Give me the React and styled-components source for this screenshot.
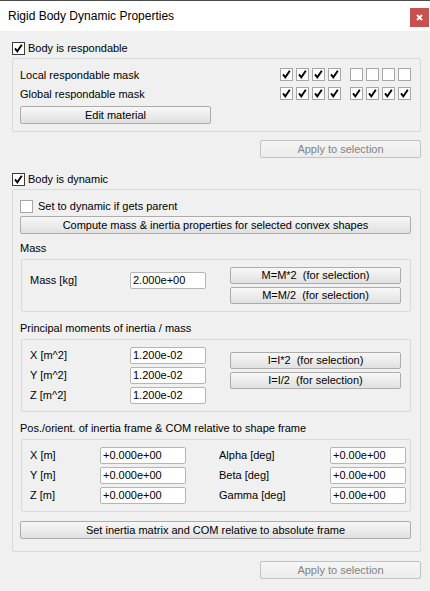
import React from "react";
import styled, { createGlobalStyle } from "styled-components";

const Global = createGlobalStyle`
  html, body { margin: 0; padding: 0; background: #f0f0f0; }
  body {
    font-family: "Liberation Sans", Arial, sans-serif;
    font-size: 11px;
    color: #000;
  }
  * { box-sizing: border-box; }
`;

const Window = styled.div`
  width: 430px;
  height: 591px;
  border-top: 1px solid #4b4b4b;
  background: #f0f0f0;
  display: flex;
  flex-direction: column;
  overflow: hidden;
`;

const TitleBar = styled.div`
  height: 30px;
  flex: none;
  background: #fff;
  display: flex;
  align-items: flex-start;
  justify-content: space-between;
  padding: 0 1px 0 8px;
`;

const Title = styled.span`
  font-size: 12px;
  line-height: 30px;
  color: #000;
`;

const CloseButton = styled.div`
  width: 19px;
  height: 19px;
  margin-top: 7px;
  background: #c75050;
  display: grid;
  place-items: center;
`;

const Content = styled.div`
  display: flex;
  flex-direction: column;
  padding: 11px 9px 0 12px;
`;

const CheckRow = styled.label`
  display: flex;
  align-items: center;
  gap: ${(p) => p.$gap ?? 3}px;
  height: 13px;
  line-height: 13px;
  margin-top: ${(p) => p.$mt ?? 0}px;
  white-space: nowrap;
`;

const Box = styled.span`
  width: 13px;
  height: 13px;
  flex: none;
  background: #fff;
  border: 1px solid ${(p) => (p.$dark ? "#3c3c3c" : "#a6a6a6")};
  display: grid;
  place-items: center;
`;

const Group = styled.div`
  border: 1px solid #d9d9d9;
  border-radius: 2px;
  display: flex;
  flex-direction: column;
  margin-top: ${(p) => p.$mt ?? 0}px;
  padding: ${(p) => p.$pad};
`;

const MaskRow = styled.div`
  display: flex;
  align-items: center;
  height: 13px;
  margin-bottom: 6px;
`;

const MaskLabel = styled.span`
  flex: 1;
  line-height: 13px;
  margin-top: 2px;
`;

const MaskSet = styled.div`
  display: flex;
  gap: 3px;
  margin-left: ${(p) => p.$ml ?? 0}px;
`;

const Button = styled.button`
  height: ${(p) => p.$h ?? 18}px;
  width: ${(p) => (p.$w ? `${p.$w}px` : "auto")};
  align-self: ${(p) => p.$align ?? "stretch"};
  margin-top: ${(p) => p.$mt ?? 0}px;
  padding: 0;
  font-family: inherit;
  font-size: 11px;
  line-height: 1;
  color: ${(p) => (p.disabled ? "#838383" : "#000")};
  border: 1px solid ${(p) => (p.disabled ? "#c2c2c2" : "#acacac")};
  border-radius: 2px;
  background: ${(p) =>
    p.disabled
      ? "linear-gradient(#f5f5f5, #ececec)"
      : "linear-gradient(#f7f7f7 0%, #ececec 50%, #e0e0e0 100%)"};
  white-space: pre;
`;

const SectionLabel = styled.div`
  height: 13px;
  line-height: 13px;
  margin-top: ${(p) => p.$mt ?? 0}px;
`;

const Inner = styled.div`
  margin: 4px 0 0 1px;
  border: 1px solid #d9d9d9;
  border-radius: 2px;
  padding: 7px ${(p) => p.$pr ?? 9}px 7px 8px;
  display: flex;
  align-items: flex-start;
`;

const FieldGrid = styled.div`
  display: grid;
  grid-template-columns: ${(p) => p.$cols};
  row-gap: 3px;
  align-items: center;
  margin-top: ${(p) => p.$mt ?? 0}px;
`;

const FieldLabel = styled.span`
  line-height: 17px;
  white-space: nowrap;
`;

const Input = styled.div`
  height: 17px;
  background: #fff;
  border: 1px solid #b5b5b5;
  border-radius: 2px;
  padding-left: 2px;
  line-height: 15px;
  white-space: nowrap;
  overflow: hidden;
`;

const ButtonCol = styled.div`
  margin-left: auto;
  width: 171px;
  display: flex;
  flex-direction: column;
  gap: 3px;
  margin-top: ${(p) => p.$mt ?? 0}px;
`;

const Check = () => (
  <svg width="11" height="11" viewBox="0 0 11 11">
    <path d="M2 5.3 L4.3 8.3 L8.8 1.8" fill="none" stroke="#000" strokeWidth="1.9" strokeLinecap="butt" strokeLinejoin="miter" />
  </svg>
);

const CheckBox = ({ checked, dark }) => (
  <Box $dark={dark}>{checked ? <Check /> : null}</Box>
);

const Mask = ({ bits }) => (
  <>
    <MaskSet>
      {bits.slice(0, 4).map((b, i) => (
        <CheckBox key={i} checked={b} />
      ))}
    </MaskSet>
    <MaskSet $ml={9}>
      {bits.slice(4).map((b, i) => (
        <CheckBox key={i} checked={b} />
      ))}
    </MaskSet>
  </>
);

export default function App() {
  return (
    <>
      <Global />
      <Window>
        <TitleBar>
          <Title>Rigid Body Dynamic Properties</Title>
          <CloseButton>
            <svg width="7" height="7" viewBox="0 0 7 7">
              <path d="M1 1 L6 6 M6 1 L1 6" stroke="#fff" strokeWidth="1.8" />
            </svg>
          </CloseButton>
        </TitleBar>
        <Content>
          <CheckRow>
            <CheckBox checked dark />
            <span>Body is respondable</span>
          </CheckRow>
          <Group $mt={3} $pad="9px 9px 7px 7px">
            <MaskRow>
              <MaskLabel>Local respondable mask</MaskLabel>
              <Mask bits={[1, 1, 1, 1, 0, 0, 0, 0]} />
            </MaskRow>
            <MaskRow>
              <MaskLabel>Global respondable mask</MaskLabel>
              <Mask bits={[1, 1, 1, 1, 1, 1, 1, 1]} />
            </MaskRow>
            <Button $w={191} $align="flex-start">Edit material</Button>
          </Group>
          <Button disabled $w={161} $align="flex-end" $mt={8}>
            Apply to selection
          </Button>
          <CheckRow $mt={15}>
            <CheckBox checked dark />
            <span>Body is dynamic</span>
          </CheckRow>
          <Group $mt={3} $pad="10px 9px 12px 7px">
            <CheckRow $gap={5}>
              <CheckBox />
              <span>Set to dynamic if gets parent</span>
            </CheckRow>
            <Button $mt={3}>Compute mass &amp; inertia properties for selected convex shapes</Button>

            <SectionLabel $mt={8}>Mass</SectionLabel>
            <Inner>
              <FieldGrid $cols="100px 76px" $mt={5}>
                <FieldLabel>Mass [kg]</FieldLabel>
                <Input>2.000e+00</Input>
              </FieldGrid>
              <ButtonCol>
                <Button $h={17}>M=M*2  (for selection)</Button>
                <Button $h={17}>M=M/2  (for selection)</Button>
              </ButtonCol>
            </Inner>

            <SectionLabel $mt={10}>Principal moments of inertia / mass</SectionLabel>
            <Inner>
              <FieldGrid $cols="100px 76px">
                <FieldLabel>X [m^2]</FieldLabel>
                <Input>1.200e-02</Input>
                <FieldLabel>Y [m^2]</FieldLabel>
                <Input>1.200e-02</Input>
                <FieldLabel>Z [m^2]</FieldLabel>
                <Input>1.200e-02</Input>
              </FieldGrid>
              <ButtonCol $mt={5}>
                <Button $h={17}>I=I*2  (for selection)</Button>
                <Button $h={17}>I=I/2  (for selection)</Button>
              </ButtonCol>
            </Inner>

            <SectionLabel $mt={10}>Pos./orient. of inertia frame &amp; COM relative to shape frame</SectionLabel>
            <Inner $pr={4}>
              <FieldGrid $cols="70px 86px 33px 111px 76px">
                <FieldLabel>X [m]</FieldLabel>
                <Input>+0.000e+00</Input>
                <span />
                <FieldLabel>Alpha [deg]</FieldLabel>
                <Input>+0.00e+00</Input>
                <FieldLabel>Y [m]</FieldLabel>
                <Input>+0.000e+00</Input>
                <span />
                <FieldLabel>Beta [deg]</FieldLabel>
                <Input>+0.00e+00</Input>
                <FieldLabel>Z [m]</FieldLabel>
                <Input>+0.000e+00</Input>
                <span />
                <FieldLabel>Gamma [deg]</FieldLabel>
                <Input>+0.00e+00</Input>
              </FieldGrid>
            </Inner>

            <Button $mt={9}>Set inertia matrix and COM relative to absolute frame</Button>
          </Group>
          <Button disabled $w={161} $align="flex-end" $mt={9}>
            Apply to selection
          </Button>
        </Content>
      </Window>
    </>
  );
}
